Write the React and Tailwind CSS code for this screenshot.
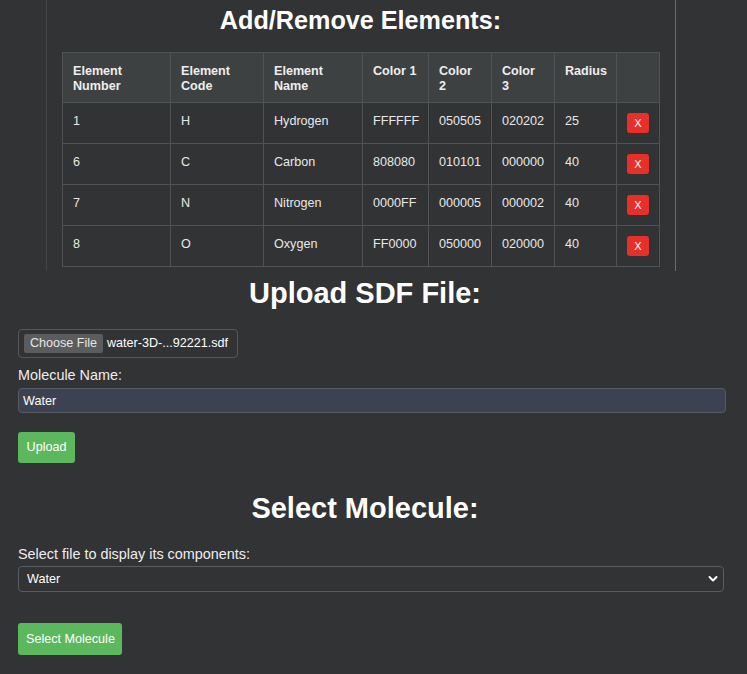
import React from 'react';

const rows = [
  { num: '1', code: 'H', name: 'Hydrogen', c1: 'FFFFFF', c2: '050505', c3: '020202', r: '25' },
  { num: '6', code: 'C', name: 'Carbon', c1: '808080', c2: '010101', c3: '000000', r: '40' },
  { num: '7', code: 'N', name: 'Nitrogen', c1: '0000FF', c2: '000005', c3: '000002', r: '40' },
  { num: '8', code: 'O', name: 'Oxygen', c1: 'FF0000', c2: '050000', c3: '020000', r: '40' },
];

const headers = [
  { label: ['Element', 'Number'], w: 'w-[108px]' },
  { label: ['Element', 'Code'], w: 'w-[93px]' },
  { label: ['Element', 'Name'], w: 'w-[99px]' },
  { label: ['Color 1'], w: 'w-[66px]' },
  { label: ['Color', '2'], w: 'w-[63px]' },
  { label: ['Color', '3'], w: 'w-[63px]' },
  { label: ['Radius'], w: 'w-[62px]' },
  { label: [], w: 'w-[43px]' },
];

function GreenButton({ children, className }) {
  return (
    <button className={`bg-[#5cb85c] text-white text-[12.6px] px-[8px] rounded-[3px] whitespace-nowrap ${className}`}>
      {children}
    </button>
  );
}

export default function App() {
  return (
    <div className="min-h-screen bg-[#323335] text-[#eeeeee] font-['Liberation_Sans',Arial,sans-serif]">
      {/* Elements table */}
      <div className="ml-[46px] w-[630px] border-l border-r border-l-[#434547] border-r-[#6a6c6e] pl-[15px] pr-[16px] pt-[6px] pb-[4px]">
        <h2 className="text-center text-[25.2px] leading-[29px] font-bold text-white">Add/Remove Elements:</h2>
        <table className="mt-[17px] w-[597px] table-fixed border-collapse text-[12.6px]">
          <thead>
            <tr className="bg-[#3e4142]">
              {headers.map((h, i) => (
                <th
                  key={i}
                  className={`${h.w} h-[50px] border border-[#505355] px-[10px] pt-[11px] align-top text-left font-bold leading-[15px]`}
                >
                  {h.label.map((l, j) => (
                    <div key={j}>{l}</div>
                  ))}
                </th>
              ))}
            </tr>
          </thead>
          <tbody>
            {rows.map((r) => (
              <tr key={r.num}>
                {[r.num, r.code, r.name, r.c1, r.c2, r.c3, r.r].map((v, i) => (
                  <td key={i} className="border border-[#505355] px-[10px] pb-[4px] h-[41px] align-middle text-[#e8e8e8]">
                    {v}
                  </td>
                ))}
                <td className="border border-[#505355] px-[10px] align-middle">
                  <button className="w-[22px] h-[20px] rounded-[3px] bg-[#e8302a] text-white text-[11px] leading-[20px]">
                    X
                  </button>
                </td>
              </tr>
            ))}
          </tbody>
        </table>
      </div>

      {/* Upload SDF */}
      <div className="pl-[18px] pr-[21px]">
        <h1 className="mt-[6px] pr-[14px] text-center text-[29px] leading-[33px] font-bold text-white">Upload SDF File:</h1>
        <div className="mt-[19px] flex items-center w-[220px] h-[29px] border border-[#55585b] rounded-[4px] px-[5px] text-[12.6px]">
          <span className="bg-[#5b5c5e] text-[#e6e6e6] h-[19px] w-[79px] rounded-[2px] flex items-center justify-center">
            Choose File
          </span>
          <span className="ml-[4px] text-white">water-3D-...92221.sdf</span>
        </div>
        <label className="block mt-[9px] text-[14.4px] leading-[17px]">Molecule Name:</label>
        <input
          readOnly
          value="Water"
          className="mt-[4px] block w-[708px] h-[25px] bg-[#3c4252] border border-[#575c60] rounded-[4px] px-[4px] text-[12.6px] text-white outline-none"
        />
        <GreenButton className="mt-[19px] h-[31px] w-[57px]">Upload</GreenButton>
      </div>

      {/* Select molecule */}
      <div className="pl-[18px] pr-[23px] pb-[18px]">
        <h1 className="mt-[29px] pr-[12px] text-center text-[29px] leading-[33px] font-bold text-white">Select Molecule:</h1>
        <label className="block mt-[21px] text-[14.4px] leading-[17px]">Select file to display its components:</label>
        <div className="relative mt-[3px] w-[706px]">
          <select className="appearance-none block w-full h-[26px] bg-[#323335] border border-[#5a5d60] rounded-[4px] pl-[8px] text-[12.6px] text-white outline-none">
            <option>Water</option>
          </select>
          <svg
            className="absolute right-[6px] top-[9px] w-[10px] h-[8px] pointer-events-none"
            viewBox="0 0 10 8"
            fill="none"
            stroke="white"
            strokeWidth="2"
            strokeLinecap="round"
            strokeLinejoin="round"
          >
            <path d="M1.5 2l3.5 3.5L8.5 2" />
          </svg>
        </div>
        <GreenButton className="mt-[31px] h-[32px] w-[104px] px-0">Select Molecule</GreenButton>
      </div>
    </div>
  );
}
